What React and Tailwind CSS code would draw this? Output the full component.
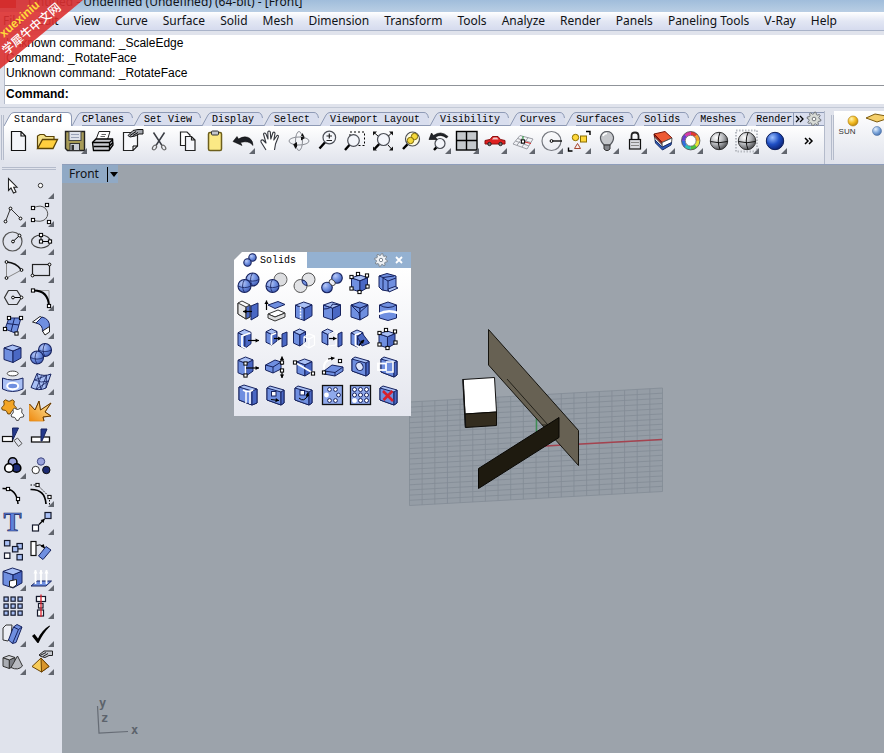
import React from "react";

const BLUE = "#6f8fe0";
const LIGHT = "#a9c0f5";
const DEEP = "#4a68c4";
const NAVY = "#16225e";
const INK = "#151a2c";

/* ---------- drawing primitives, all on a 28 x 28 canvas ---------- */

const pts = (a) => a.map((p) => p.join(",")).join(" ");

function Icon({ children, corner }) {
  return (
    <svg viewBox="0 0 28 28" className="block h-7 w-7 shrink-0" fill="none" stroke={INK} strokeWidth="1" aria-hidden="true">
      {children}
      {corner && <polygon points="27,21 27,27 21,27" fill="#62666e" stroke="none" />}
    </svg>
  );
}

function Poly({ p, f = "none", s = INK, w = 1 }) {
  return <polygon points={pts(p)} fill={f} stroke={s} strokeWidth={w} strokeLinejoin="round" />;
}

function Node({ at, f = "#fff" }) {
  return (
    <>
      {at.map(([x, y], i) => (
        <rect key={i} x={x - 1.6} y={y - 1.6} width="3.2" height="3.2" fill={f} stroke="#000" strokeWidth="1" />
      ))}
    </>
  );
}

function Dot({ at }) {
  return (
    <>
      {at.map(([x, y], i) => (
        <circle key={i} cx={x} cy={y} r="1.4" fill="#fff" stroke="#000" />
      ))}
    </>
  );
}

function Sq({ x, y, s = 5.4, f = LIGHT }) {
  return <rect x={x} y={y} width={s} height={s} fill={f} stroke={INK} strokeWidth="1.2" />;
}

function Sphere({ x, y, r, f = "url(#ball)", lines = true }) {
  return (
    <>
      <circle cx={x} cy={y} r={r} fill={f} stroke={NAVY} strokeWidth="1.1" />
      {lines && (
        <path
          d={`M${x - r} ${y} Q${x} ${y + r * 0.5} ${x + r} ${y} M${x} ${y - r} Q${x - r * 0.6} ${y} ${x} ${y + r}`}
          stroke={NAVY}
          strokeWidth=".8"
        />
      )}
    </>
  );
}

function Cube({ x = 5.5, y = 4.5, w = 16.5, h = 19, top = LIGHT, left = BLUE, right = DEEP, s = NAVY }) {
  const m = x + w * 0.53;
  const k = h * 0.17;
  return (
    <>
      <Poly p={[[x, y + k], [m, y + 2 * k], [m, y + h], [x, y + h - k]]} f={left} s={s} />
      <Poly p={[[m, y + 2 * k], [x + w, y + k * 0.9], [x + w, y + h - k * 1.5], [m, y + h]]} f={right} s={s} />
      <Poly p={[[x, y + k], [x + w * 0.5, y], [x + w, y + k * 0.9], [m, y + 2 * k]]} f={top} s={s} />
    </>
  );
}

function Slab({ x = 5, y = 4, w = 16, h = 19, t = 3, front = BLUE, top = LIGHT, s = NAVY }) {
  return (
    <>
      <Poly p={[[x, y + 2], [x + t, y], [x + w, y + 4], [x + w, y + h - 2], [x + w - t, y + h], [x, y + h - 5]]} f={top} s={s} />
      <Poly p={[[x, y + 2], [x + w - t, y + 6], [x + w - t, y + h], [x, y + h - 5]]} f={front} s={s} />
      <Poly p={[[x + w - t, y + 6], [x + w, y + 4], [x + w, y + h - 2], [x + w - t, y + h]]} f={DEEP} s={s} />
    </>
  );
}

function Arrow({ x1, y1, x2, y2, s = "#000", w = 1.2 }) {
  const a = Math.atan2(y2 - y1, x2 - x1);
  const q = (d) => [x2 - 4 * Math.cos(a + d), y2 - 4 * Math.sin(a + d)];
  return (
    <>
      <path d={`M${x1} ${y1} L${x2} ${y2}`} stroke={s} strokeWidth={w} />
      <polygon points={pts([[x2, y2], q(0.55), q(-0.55)])} fill={s} stroke="none" />
    </>
  );
}

function Lens({ x, y, r, hx, hy, f = "#f4f6fb" }) {
  const d = Math.hypot(hx - x, hy - y);
  const sx = x + ((hx - x) * r) / d;
  const sy = y + ((hy - y) * r) / d;
  return (
    <>
      <path d={`M${sx} ${sy} L${hx} ${hy}`} stroke="#000" strokeWidth="2.4" />
      <circle cx={x} cy={y} r={r} fill={f} stroke="#4b4e56" strokeWidth="1.2" />
    </>
  );
}

function Gear({ x, y, r, f, s, n = 8, hole = true }) {
  const p = [];
  for (let i = 0; i < n * 4; i++) {
    const k = i % 4 < 2 ? r : r * 0.72;
    const a = ((i + 0.5) * Math.PI) / (n * 2);
    p.push([(x + k * Math.cos(a)).toFixed(2), (y + k * Math.sin(a)).toFixed(2)]);
  }
  return (
    <>
      <Poly p={p} f={f} s={s} />
      {hole && <circle cx={x} cy={y} r={r * 0.26} fill="#fff" stroke={s} />}
    </>
  );
}

/* ---------- main toolbar ---------- */

const toolbar = [
  ["New", false, <path d="M7.500 4.500H17L21.500 9V23.500H7.500ZM17 4.500V9H21.500" fill="#f4f5f9" stroke="#111" strokeWidth="1.200" />],
  ["Open", false, <>
    <path d="M5.500 21V9L8 7.500H12L14 9.500H22V12" fill="#f4e18a" stroke="#5a4306" strokeWidth="1.200" />
    <path d="M5.500 21.500 10.500 12.500H25.500L21 21.500Z" fill="#ffcf3e" stroke="#5a4306" strokeWidth="1.300" />
  </>],
  ["Save", true, <>
    <path d="M5.500 4.500H24.500V23.500H7.500L5.500 21.500Z" fill="#a79b58" stroke="#222" strokeWidth="1.400" />
    <rect x="9" y="4.500" width="12" height="9" fill="#dfe3ec" stroke="#444" />
    <path d="M11 7.500H19M11 10.500H19" stroke="#9aa3b8" />
    <rect x="10" y="16.500" width="9.500" height="7" fill="#c9ccd6" stroke="#333" />
    <rect x="11.500" y="18" width="2.500" height="5" fill="#333" stroke="none" />
  </>],
  ["Print", false, <>
    <path d="M8 12.500 11 4.500H22L19.500 12.500" fill="#fff" stroke="#222" />
    <path d="M4.500 15.500 8 12H24.500L25 18 21 23.500H5.500Z" fill="#c8cad1" stroke="#000" strokeWidth="1.300" />
    <path d="M4.500 15.500H21.500L25 12.500M21.500 15.500V23" stroke="#000" strokeWidth="1.300" />
    <path d="M5.500 19.500H21L25 15.500" stroke="#000" strokeWidth="1.600" />
    <path d="M13.500 7.500H18M12.500 9.500H17" stroke="#666" />
  </>],
  ["Properties", false, <>
    <path d="M7.500 5.500H21.500V19L17 23.500H7.500Z" fill="#f8f9fc" stroke="#222" strokeWidth="1.200" />
    <path d="M21.500 19H17V23.500" stroke="#000" />
    <path d="M12 8.500 17 3.500 22 2.500H27V7H23L19 9 14 10Z" fill="#a4a7ae" stroke="#111" />
    <path d="M14 8.500 20 4.500M17 8.500 22 5.500" stroke="#111" />
  </>],
  ["Cut", false, <>
    <path d="M9.500 5.500 18 18.500M20.500 5.500 12 18.500" stroke="#3a3d44" strokeWidth="1.500" />
    <ellipse cx="10.500" cy="20.500" rx="1.700" ry="2.600" transform="rotate(35 10.500 20.500)" stroke="#666" strokeWidth="1.200" />
    <ellipse cx="19.700" cy="20.500" rx="1.700" ry="2.600" transform="rotate(-35 19.700 20.500)" stroke="#666" strokeWidth="1.200" />
  </>],
  ["Copy", false, <>
    <path d="M8.500 5H15L18 8V18.500H8.500Z" fill="#fff" stroke="#222" strokeWidth="1.200" />
    <path d="M13.500 9.500H19.500L23 13V23.500H13.500ZM19.500 9.500V13H23" fill="#f6f7fb" stroke="#222" strokeWidth="1.200" />
  </>],
  ["Paste", false, <>
    <rect x="8.500" y="5.500" width="13" height="18" rx="1.500" fill="#fbe985" stroke="#6d5f1c" strokeWidth="1.500" />
    <rect x="11.500" y="4" width="7" height="4" rx="1" fill="#c3c6cd" stroke="#333" />
  </>],
  ["Undo", true, <path d="M5 14.500 9 9.500 10.500 12Q17 8 22 11.500 25 14 25 18.500 21 13 12.500 15.500L14 18.500Z" fill="#1d1f25" stroke="#000" strokeWidth=".5" />],
  ["Pan", false, <path d="M10 23 5 15Q4.500 12.500 7 13L10 16 7.500 7Q8.500 5 10 7L12 12 11.800 5Q13 3 14.300 5L14.800 12 17 5.500Q18.700 4.500 19 6.500L17.800 13 21 8.500Q22.800 8 22.300 10L19.500 17 18.500 23" fill="#fff" stroke="#33363d" strokeWidth="1.100" strokeLinejoin="round" />],
  ["Rotate view", false, <>
    <ellipse cx="15" cy="14" rx="10" ry="4" stroke="#8a8d94" />
    <ellipse cx="15" cy="14" rx="3.500" ry="9.500" stroke="#8a8d94" />
    <path d="M9 17.500 13 15V20ZM21 11 17 8.500V13.500ZM18.500 6 20.500 10H16.500ZM11.500 22 9.500 18H13.500Z" fill="#111" stroke="none" />
  </>],
  ["Zoom dynamic", false, <>
    <Lens x={17.300} y={10.500} r={6.300} hx={7.500} hy={21.500} />
    <path d="M14.500 9H20M17.300 6.500V11.500M14.500 13.500H20" stroke="#222" strokeWidth="1.200" />
  </>],
  ["Zoom window", false, <>
    <rect x="10" y="5" width="14.500" height="13.500" stroke="#000" strokeDasharray="2 2" />
    <Lens x={13.500} y={13.500} r={5.800} hx={5} hy={23} />
  </>],
  ["Zoom extents", false, <>
    <Lens x={15.500} y={12.500} r={6} hx={6.500} hy={22} />
    <path d="M5 4.500H9L5 8.500ZM25 4.500H21L25 8.500ZM5 23.500V19.500L9 23.500ZM25 23.500V19.500L21 23.500Z" fill="#111" stroke="none" />
    <path d="M6 5.500 10 9M24 5.500 20.500 9M24 22.500 20 18" stroke="#111" />
  </>],
  ["Zoom selected", false, <>
    <Lens x={16.500} y={12} r={7} hx={7} hy={22} f="#fffbe0" />
    <circle cx="18.500" cy="9.500" r="3.200" fill="#f6d93b" stroke="#7c6a0a" />
    <circle cx="14.500" cy="13.500" r="3.200" fill="#f6d93b" stroke="#7c6a0a" />
  </>],
  ["Undo view", true, <>
    <Lens x={16} y={16.500} r={5} hx={10} hy={23} />
    <path d="M5 12.500 7.500 6 9.500 8.500Q17 3 24 9.500L22.500 11Q17 6.500 11.500 10L13 12.500Z" fill="#22242a" stroke="#000" strokeWidth=".6" />
  </>],
  ["4 Viewports", true, <>
    <rect x="4.500" y="4.500" width="20.500" height="18.500" fill="#c4c8cc" stroke="#000" strokeWidth="1.400" />
    <path d="M14.500 4.500V23M4.500 13.500H25" stroke="#000" strokeWidth="1.400" />
  </>],
  ["Car", true, <>
    <path d="M5 17V13.500L10 12.500 12.500 9.500H18L20.500 12.500 25 13.500V17Z" fill="#df2020" stroke="#8c0f0f" />
    <path d="M12 12.500 13.500 10.500H17L18.500 12.500Z" fill="#f3c9c9" stroke="none" />
    <circle cx="9.500" cy="17" r="1.700" fill="#777" stroke="#222" /><circle cx="20.500" cy="17" r="1.700" fill="#777" stroke="#222" />
  </>],
  ["Set CPlane", true, <>
    <path d="M5 17 12 8.500 25 12 19 22ZM7.500 14 21 19M9.500 11.500 23 15.500M9 18.200 15.500 9.500M14 20 20 10.500" stroke="#9b9ea5" />
    <path d="M15 14.500 23 16.500" stroke="#d42a2a" /><path d="M15 14V9" stroke="#2a9c3c" />
    <Node at={[[15, 14.500]]} />
  </>],
  ["Object snap", true, <>
    <circle cx="15.500" cy="14" r="9.500" stroke="#75787f" strokeWidth="1.200" />
    <path d="M15.500 14H26" stroke="#111" strokeWidth="1.400" />
    <Dot at={[[15.500, 14]]} />
  </>],
  ["Select", true, <>
    <circle cx="11.500" cy="10.500" r="3.200" fill="#ffd83a" stroke="#8a6d00" />
    <rect x="16.500" y="9" width="6" height="6" fill="#ffd83a" stroke="#8a6d00" />
    <path d="M13.500 16.500 16.500 21.500H10.500Z" fill="#f9efec" stroke="#a4452f" />
    <path d="M22 4.500H26V8M4.500 20.500V24H8.500" stroke="#000" strokeWidth="1.400" />
  </>],
  ["Hide", true, <>
    <path d="M12 18Q8 14 8.500 10Q10 4.500 15 4.500T21.500 10Q22 14 18 18Z" fill="#c6c8cc" stroke="#55585e" strokeWidth="1.200" />
    <path d="M12 18H18V22L16 23.500H14L12 22Z" fill="#85878c" stroke="#333" />
    <path d="M11 9Q12 6.500 15 6.500" stroke="#fff" strokeWidth="1.500" />
  </>],
  ["Lock", true, <>
    <path d="M11.500 13V9Q11.500 5.500 15 5.500T18.500 9V13" stroke="#222" strokeWidth="1.800" />
    <rect x="9.500" y="12.500" width="11" height="9.500" fill="#d9dbe0" stroke="#111" strokeWidth="1.200" />
    <path d="M11 15.500H19M11 18.500H19" stroke="#888" />
  </>],
  ["Layers", true, <>
    <Poly p={[[6, 7], [17, 4.500], [24, 11], [14, 15.500]]} f="#ee5a34" s="#7a1408" />
    <Poly p={[[6, 7], [14, 15.500], [14.300, 18], [6.500, 10]]} f="#b81c10" s="#5a0d06" />
    <Poly p={[[6.500, 10], [14.300, 18], [14.300, 20.500], [7, 13]]} f="#fff" s="#555" />
    <Poly p={[[14, 15.500], [24, 11], [23.500, 16], [14.300, 20.500]]} f="#fff" s="#555" />
    <Poly p={[[7, 13], [14.300, 20], [23.500, 15.500], [23, 18], [14.500, 23], [7.500, 16]]} f="#2c58b8" s="#1a2f66" />
  </>],
  ["Display color", true, <>
    {["#e33b2e", "#f3a02a", "#e8e337", "#4fc23a", "#2dbfb6", "#2f6fe0", "#6a3fd0", "#d63aa8"].map((c, i) => {
      const a = (i * Math.PI) / 4 - 1.570;
      const b = a + 0.830;
      return <path key={c} d={`M${14.700 + 7.300 * Math.cos(a)} ${13.700 + 7.300 * Math.sin(a)} A7.300 7.300 0 0 1 ${14.700 + 7.300 * Math.cos(b)} ${13.700 + 7.300 * Math.sin(b)}`} stroke={c} strokeWidth="3.600" />;
    })}
    <circle cx="14.700" cy="13.700" r="9.200" stroke="#444" strokeWidth=".8" /><circle cx="14.700" cy="13.700" r="5.400" stroke="#555" strokeWidth=".7" fill="#fff" />
  </>],
  ["Shade", false, <>
    <circle cx="15" cy="14" r="8.700" fill="url(#grayball)" stroke="#333" />
    <path d="M6.500 14.500Q15 17 23.500 14.500M16 5.500Q12.500 14 16 22.500" stroke="#111" />
  </>],
  ["Rendered", true, <>
    <rect x="4" y="3.500" width="21" height="21" stroke="#b8bbc2" strokeWidth="2" strokeDasharray="1.500 1.500" />
    <circle cx="15" cy="14" r="8.700" fill="url(#grayball)" stroke="#333" />
    <path d="M6.500 14.500Q15 17 23.500 14.500M16 5.500Q12.500 14 16 22.500" stroke="#111" />
  </>],
  ["Render", true, <circle cx="15" cy="14" r="8.700" fill="url(#deepball)" stroke="#0c1d5a" />],
];

/* ---------- side palette, two columns ---------- */

const hex = [[5.500, 13.500], [9.500, 6.500], [18, 6.500], [22.500, 13.500], [18, 20.500], [9.500, 20.500]];

const palette = [
  ["Select objects", false, <path d="M9.500 6.500V18.500L12 16 14.500 21 17 20 14.700 15.200H18Z" fill="#fff" stroke="#222" strokeWidth="1.100" />],
  ["Point", true, <circle cx="13.500" cy="13.500" r="2.200" fill="#fff" stroke="#333" />],
  ["Polyline", true, <><path d="M6.500 21.500 11.500 8.500 21.500 18.500" stroke="#333" /><Dot at={[[6.500, 21.500], [11.500, 8.500], [21.500, 18.500]]} /></>],
  ["Curve", true, <><path d="M6 8Q14 4 18.500 8.500 23 14 18.500 19 14 23 6 20" stroke="#555" /><Node at={[[6, 8], [20, 5], [6, 20], [22, 22]]} /></>],
  ["Circle", true, <><circle cx="13.500" cy="13.500" r="9.500" stroke="#555" strokeWidth="1.200" /><path d="M14 13.500 20.500 7.500" stroke="#000" /><Dot at={[[14, 13.500], [20.500, 7.500]]} /></>],
  ["Ellipse", true, <><ellipse cx="14" cy="13.500" rx="9.500" ry="6.500" stroke="#444" strokeWidth="1.200" /><path d="M14 7V13.500H23" stroke="#000" /><Node at={[[14, 7], [14, 13.500], [23, 13.500]]} /></>],
  ["Arc", true, <><path d="M7.500 6V22L22.500 14" stroke="#888" /><path d="M7.500 6Q17 6.500 22.500 14" stroke="#111" strokeWidth="1.500" /><Dot at={[[7.500, 6], [22.500, 14], [7.500, 22]]} /></>],
  ["Rectangle", true, <><rect x="5.500" y="8.500" width="17" height="11" stroke="#222" strokeWidth="1.200" /><Dot at={[[22.500, 8.500], [5.500, 19.500]]} /></>],
  ["Polygon", true, <><Poly p={hex} s="#333" w={1.200} /><path d="M14 13.500H22.500" stroke="#000" /><Dot at={[[14, 13.500], [22.500, 13.500]]} /></>],
  ["Fillet curves", true, <><path d="M6 6.500H22V22" stroke="#999" /><path d="M6 6.500Q21 6 22 22" stroke="#000" strokeWidth="2" /><Node at={[[6, 6.500], [22, 22]]} /></>],
  ["Surface from points", true, <><Poly p={[[10, 6], [22, 6], [17.500, 21.500], [6, 17]]} f={BLUE} s={NAVY} /><path d="M8 11.500 20 13M15.500 6 12 19.500" stroke={NAVY} /><Node at={[[10, 6], [22, 6], [6, 17], [17.500, 21.500]]} /></>],
  ["Surface creation", true, <>
    <Poly p={[[5.500, 10], [13, 4.500], [16, 6], [9, 11]]} f="#fff" s="#222" />
    <path d="M9 11 15 5Q23 7 22.500 15L15.500 19.500Q16 12.500 9 11Z" fill={BLUE} stroke={NAVY} />
    <Poly p={[[15.500, 19], [22.500, 14.500], [22.500, 20], [18, 23]]} f="#fff" s="#222" />
  </>],
  ["Box", true, <Cube x={5} y={5} w={17} h={17.500} />],
  ["Boolean union", true, <><Sphere x={18} y={10} r={6.500} /><Sphere x={10} y={17.500} r={6.500} /></>],
  ["Project curves", true, <>
    <ellipse cx="13.700" cy="5.500" rx="5.500" ry="2.400" fill="#fff" stroke="#444" />
    <path d="M3.500 10Q13.500 14 24 10V21Q13.500 26 3.500 21Z" fill={LIGHT} stroke={NAVY} />
    <ellipse cx="13.700" cy="18" rx="5.500" ry="3.200" fill={BLUE} stroke="#fff" strokeWidth="2" />
  </>],
  ["Mesh", true, <>
    <path d="M10 5.500Q17 9 24 6L19 20Q12 23.500 4 19.500Z" fill={LIGHT} stroke={NAVY} />
    <path d="M7.500 12Q14 15.500 21.500 13M14.500 7.500 9 21.500M19.500 7.500 14 21.500M10 5.500 14 21.500M7.500 12 19.500 7.500M21.500 13 9 21.500M19.500 7.500 19 20" stroke={NAVY} strokeWidth=".8" />
  </>],
  ["Join", false, <><Gear x={10} y={10.500} r={7.500} n={5} hole={false} f="#f3a526" s="#6a4204" /><Gear x={18.500} y={18} r={6.500} n={5} hole={false} f="#fff" s="#444" /></>],
  ["Explode", false, <>
    <Poly p={[[2.500, 8], [8, 14], [12, 5], [13.500, 14], [24, 7], [18, 16], [24, 20], [16, 21], [17, 25], [2.500, 25]]} f="url(#burst)" s="#e58a16" w={0.800} />
    <path d="M2.500 8 8 14 12 5 13.500 14 24 7 18 16 24 20 16 21 17 25" stroke="#5b3605" />
  </>],
  ["Trim", false, <>
    <rect x="3.500" y="12.500" width="10" height="5" fill="#fff" stroke="#111" strokeWidth="1.200" />
    <Poly p={[[13.500, 4], [19.500, 4], [14, 15.500]]} f="#23398c" s={NAVY} />
    <Poly p={[[15, 16.500], [18.500, 14], [23, 19.500], [19.500, 22.500]]} s="#555" />
  </>],
  ["Split", false, <><rect x="4.500" y="13" width="18" height="5" fill="#fff" stroke="#111" strokeWidth="1.300" /><Poly p={[[14, 5], [20, 5], [15, 17], [14, 17]]} f="#23398c" s={NAVY} /></>],
  ["Group", true, <>
    <circle cx="13.700" cy="10" r="4.300" fill="#9aa3dc" stroke="#000" strokeWidth="1.600" /><circle cx="17.500" cy="16" r="4.300" fill="#1c2a72" stroke="#000" strokeWidth="1.600" /><circle cx="10" cy="16" r="4.300" fill="#fff" stroke="#000" strokeWidth="1.600" />
  </>],
  ["Ungroup", false, <>
    <circle cx="14" cy="9.500" r="3.700" fill="#9aa3dc" stroke="#3d4680" /><circle cx="8.700" cy="18" r="3.700" fill="#fff" stroke="#333" /><circle cx="19.300" cy="18" r="3.700" fill="#1c2a72" stroke="#111" />
  </>],
  ["Edit points", false, <><path d="M3.500 8.500Q18 8 19 24" stroke="#000" strokeWidth="1.500" /><Node at={[[9, 9], [19, 19]]} /></>],
  ["Control points", true, <><path d="M3.500 5H10.500L22.500 17V25" stroke="#000" strokeDasharray="1.500 1.500" /><path d="M3.500 9.500Q18 9 19 24" stroke="#000" strokeWidth="1.700" /><Node at={[[10.500, 5], [22.500, 17]]} /></>],
  ["Text", false, <text x="13.500" y="23" textAnchor="middle" fontSize="27" fontWeight="700" fontFamily="Liberation Serif, serif" fill="#5f82dc" stroke={NAVY} strokeWidth=".7">T</text>],
  ["Move", true, <><Sq x={5.500} y={17} s={6} f="#fff" /><Sq x={18} y={4.500} s={6} /><Arrow x1={12} y1={16.500} x2={17.500} y2={11} /></>],
  ["Copy objects", false, <><Sq x={5.500} y={4.500} /><Sq x={18} y={7.500} /><Sq x={13.500} y={10.500} /><Sq x={5.500} y={17} f="#fff" /><Sq x={18} y={18.500} /></>],
  ["Rotate", false, <>
    <rect x="4" y="5.500" width="5" height="14" fill="#fff" stroke="#111" strokeWidth="1.200" />
    <Poly p={[[19, 10.500], [24, 14], [16, 23.500], [11.500, 20]]} f={BLUE} s={NAVY} />
    <path d="M9.500 9.500Q13 8 16 10" stroke="#000" /><Arrow x1={15} y1={9} x2={17.500} y2={12} />
  </>],
  ["Extract", true, <>
    <Cube x={4} y={4} w={19} h={20} /><Poly p={[[10.500, 17], [17.500, 15.500], [17.500, 21], [14, 23.500], [10.500, 22.500]]} f="#fff" s="#222" />
  </>],
  ["Extrude", true, <>
    <Poly p={[[4, 22], [10, 17], [24.500, 17], [19, 22]]} f={BLUE} s={NAVY} />
    {[8.500, 14, 19.500].map((x) => <Arrow key={x} x1={x} y1={20} x2={x} y2={6} s="#fff" w={1.800} />)}
  </>],
  ["Array", false, <>{[5, 12, 19].map((x) => [5, 12, 19].map((y) => <Sq key={`${x}-${y}`} x={x} y={y} s={4.200} />))}</>],
  ["Align", true, <>
    <Sq x={9.500} y={4.500} s={5} f="#fff" /><rect x="9.500" y="4.500" width="9" height="5" fill="#fff" stroke={INK} strokeWidth="1.200" /><Sq x={11.500} y={11.500} s={4.500} f="#fff" /><Sq x={10.500} y={18} s={6} f="#fff" /><path d="M14 2.500V25" stroke="#d9202c" strokeWidth="1.300" />
  </>],
  ["Orient", true, <>
    <Poly p={[[4, 8], [7, 5], [13, 5], [12, 17], [9, 21], [4, 20]]} f="#eceef4" s="#333" />
    <Poly p={[[14.500, 7], [18, 4.500], [23, 7], [17, 22.500], [13.500, 23.500], [9.500, 20]]} f={BLUE} s={NAVY} /><path d="M14.500 7 19.500 9.500 23 7M19.500 9.500 13.500 23.500" stroke={NAVY} />
  </>],
  ["Check", true, <path d="M5 16 7.500 14 11 18.500Q15 10 22.500 5.500L23 6.200Q16 13 11.500 23H10.500Z" fill="#000" stroke="none" />],
  ["Shapes", true, <>
    <Cube x={4} y={7.500} w={12} h={13} top="#d4d6da" left="#a9acb2" right="#7e8188" s="#333" />
    <path d="M18.500 8 23.500 18Q19 23 12 19.500Z" fill="#b9bcc2" stroke="#333" />
  </>],
  ["Render tools", true, <>
    <Poly p={[[14, 10], [22, 18.500], [14.500, 24], [5, 18.500]]} f="#f8cc58" s="#6a4204" /><Poly p={[[14, 10], [22, 18.500], [14.500, 24]]} f="#d9962a" s="#6a4204" />
    <path d="M12 7 17 3H25.500V7.500H22L18 9.500 14 8.500Z" fill="#c5c8ce" stroke="#222" /><path d="M13 7.500 19 4.500M16 8.500 21 5.500" stroke="#222" />
  </>],
];

/* ---------- floating solids toolbar, six columns ---------- */

const eightNodes = [[5.500, 8], [12, 5], [21, 6.500], [21.500, 17.500], [13.500, 23], [5.500, 19.500]];

const solids = [
  ["Union", <><Sphere x={18.500} y={10.500} r={6.500} /><Sphere x={10.500} y={17} r={6.500} /></>],
  ["Difference", <><circle cx="18.500" cy="10.500" r="6.500" fill="#dcdde0" stroke="#666" /><Sphere x={10.500} y={17} r={6.500} /></>],
  ["Intersection", <>
    <circle cx="18.500" cy="10.500" r="6.500" fill="#e2e3e6" stroke="#555" /><circle cx="10.500" cy="17" r="6.500" fill="#e2e3e6" stroke="#555" />
    <path d="M12 11Q17 11.500 17 16.500Q12 16 12 11Z" fill={BLUE} stroke={NAVY} />
  </>],
  ["Boolean split", <><Sphere x={19} y={9} r={5.300} lines={false} /><Sphere x={9} y={18.500} r={5.300} lines={false} /><ellipse cx="14.200" cy="13.500" rx="3.500" ry="2.500" transform="rotate(45 14.200 13.500)" fill="#eceef5" stroke="#333" strokeWidth=".8" /></>],
  ["Edit points on", <><Cube x={5.500} y={6} w={16} h={17} /><Node at={eightNodes} /></>],
  ["Shell", <>
    <Poly p={[[5, 7], [13, 4.500], [22, 7], [22, 19], [14, 22], [8, 21], [5, 18]]} f={BLUE} s={NAVY} />
    <path d="M5 7 9 8.500V21M9 8.500 20 7M9 9 14 12V22M14 12 22 9" stroke={NAVY} /><Poly p={[[14, 20], [21, 17.500], [24, 19], [15, 23]]} f={LIGHT} s={NAVY} />
  </>],
  ["Cap holes", <>
    <Slab x={4} y={4} w={12} h={18} t={4} front="#e6e6e6" top="#fafafa" s="#333" /><Poly p={[[17, 9], [24, 6], [24, 19], [17, 23]]} f={DEEP} s={NAVY} /><Arrow x1={18} y1={14.500} x2={9} y2={14.500} />
  </>],
  ["Extract surface", <>
    <Poly p={[[6, 17], [16, 13], [23, 16], [13, 20]]} f="#fff" s="#333" /><Poly p={[[6, 17], [13, 20], [23, 16], [23, 20], [13, 24], [6, 21]]} f="#dedede" s="#333" />
    <Poly p={[[6, 8], [16, 4.500], [23, 7.500], [13, 11.500]]} f={BLUE} s={NAVY} /><Arrow x1={4.500} y1={13} x2={4.500} y2={3.500} />
  </>],
  ["Merge faces", <><Cube x={5.500} y={5} w={16.500} h={18.500} /><path d="M10.500 9.500V22" stroke="#fff" strokeWidth="1.500" strokeDasharray="2 1" /></>],
  ["Fillet edge", <><Cube x={5.500} y={5} w={17} h={18} /><path d="M6 12Q13 12 14.500 7L22 8" stroke={NAVY} /></>],
  ["Chamfer edge", <><Cube x={5} y={5} w={17} h={18} left={BLUE} right={BLUE} top={BLUE} /><path d="M5 8 13 16 22 8M13 16 14 23" stroke={NAVY} /></>],
  ["Wire cut", <>
    <path d="M5.500 8 14 5 22.500 8V21L14 23.500 5.500 21Z" fill={BLUE} stroke={NAVY} /><path d="M5.500 8Q14 13 22.500 8" stroke={NAVY} />
    <path d="M4.500 17Q14 12 24 16" stroke="#fff" strokeWidth="2.500" />
  </>],
  ["Extrude face", <><Cube x={4} y={4.500} w={13} h={19} /><path d="M16.500 8 8 11V21.500L12 23.500" stroke="#fff" strokeWidth="1.800" /><Arrow x1={14} y1={15.500} x2={25} y2={15.500} /></>],
  ["Extrude to boundary", <><Cube x={4} y={4} w={11} h={16} /><path d="M14 8 9.500 10V20" stroke="#fff" strokeWidth="1.800" /><Arrow x1={12} y1={13.500} x2={19.500} y2={13.500} /><Poly p={[[20, 9], [25, 7], [25, 20], [20, 22]]} f={DEEP} s={NAVY} /></>],
  ["Copy face", <><Cube x={3.500} y={4} w={12} h={17} /><path d="M14 12 19 9 24.500 11V20L19 23 14 20ZM14 12 19 14 24.500 11M19 14V23" stroke="#fff" strokeWidth="1.200" /></>],
  ["Move face", <><Cube x={4} y={4} w={11} h={16} /><path d="M11 9 18 6V20L11 21Z" fill="#e9ebf5" stroke="#fff" /><Arrow x1={11} y1={13.500} x2={18.500} y2={13.500} /><Poly p={[[20, 9], [24, 7], [24, 20], [20, 22]]} f={DEEP} s={NAVY} /></>],
  ["Rotate face", <><Cube x={5} y={5} w={12} h={17} /><path d="M15 8 9.500 10V20L13 22" stroke="#fff" strokeWidth="1.800" /><Poly p={[[11.500, 12], [16, 8], [23.500, 18], [16, 21]]} f={DEEP} s={NAVY} /><Arrow x1={13} y1={20} x2={18} y2={15} /></>],
  ["Solid points", <><Cube x={5} y={6} w={16} h={17} /><Node at={eightNodes} /></>],
  ["Move edge", <><Cube x={4} y={4} w={15} h={19} /><path d="M11.500 9V23" stroke="#fff" strokeWidth="1.500" /><Arrow x1={12} y1={15} x2={25} y2={15} /><Node at={[[11.500, 10.500], [11.500, 22.500]]} /></>],
  ["Shear", <><Poly p={[[3.500, 12], [13, 7], [19, 9], [19, 16], [11, 20], [3.500, 17]]} f={BLUE} s={NAVY} /><path d="M3.500 12 11 14 19 9M11 14V20" stroke={NAVY} /><Arrow x1={20} y1={12} x2={20} y2={3.500} /><Arrow x1={20} y1={17} x2={20} y2={25} /><Node at={[[20, 9.500], [20, 17.500]]} /></>],
  ["Split face", <><Cube x={7} y={6} w={15} h={17} /><path d="M5 9.500 23 20" stroke="#fff" strokeWidth="2" /><Node at={[[5, 9.500], [23, 20.500]]} /></>],
  ["Fold face", <><Poly p={[[6, 18], [14, 12], [25, 14], [25, 18], [17, 23], [6, 21]]} f={BLUE} s={NAVY} /><path d="M6 18 17 19.500 25 14M17 19.500V23" stroke={NAVY} /><path d="M6 16Q5 8 13 6" stroke="#fff" strokeWidth="2.200" /><Arrow x1={10} y1={6} x2={16.500} y2={5} /><Node at={[[6, 19.500], [22, 8]]} /></>],
  ["Round hole", <><Slab x={6} y={4} w={17} h={19} /><ellipse cx="13.500" cy="13.500" rx="3.400" ry="4.200" transform="rotate(-30 13.500 13.500)" fill="#dfe6fa" stroke={NAVY} /></>],
  ["Place hole", <><Slab x={7} y={4} w={16} h={20} /><rect x="4" y="10.500" width="8" height="6.500" stroke="#fff" strokeWidth="1.800" /><path d="M12 9H19V19H12" stroke="#fff" strokeWidth="1.600" /></>],
  ["Revolve hole", <><Slab x={5} y={4} w={18} h={20} t={5} /><path d="M9 9Q14 12 19 9M12 11V22M16 11V23" stroke="#fff" strokeWidth="1.500" /></>],
  ["Move hole", <><Slab x={5} y={5} w={17} h={19} /><rect x="9.500" y="10.500" width="4.500" height="4.500" fill="#fff" stroke={NAVY} /><Arrow x1={9} y1={18.500} x2={17} y2={19.500} /></>],
  ["Rotate hole", <><Slab x={5} y={5} w={17} h={19} /><rect x="10" y="9.500" width="4.500" height="4.500" fill="#fff" stroke={NAVY} /><path d="M9 17Q14 22 18 14" stroke="#000" /><Arrow x1={17} y1={16} x2={18} y2={11.500} /></>],
  ["Polar array hole", <>
    <rect x="4.500" y="4.500" width="20" height="19" fill="#8fa9ec" stroke="#111" strokeWidth="1.300" />
    {[[11.500, 8.500], [17.500, 8.500], [20.500, 14], [17.500, 19.500], [11.500, 19.500]].map(([x, y]) => <circle key={`${x}${y}`} cx={x} cy={y} r="1.900" fill="#fff" stroke={NAVY} />)}
    <circle cx="8.500" cy="14" r="2.400" fill="#fff" stroke="none" />
  </>],
  ["Grid array hole", <>
    <rect x="4.500" y="4.500" width="20" height="19" fill="#8fa9ec" stroke="#111" strokeWidth="1.300" />
    {[8.500, 14.500, 20.500].map((x) => [8.500, 14, 19.500].map((y) => <circle key={`${x}${y}`} cx={x} cy={y} r="2" fill="#fff" stroke={x === 8.500 && y === 19.500 ? "#fff" : NAVY} />))}
  </>],
  ["Delete hole", <><Slab x={6} y={5} w={17} h={19} /><path d="M9 10 19 20M18.500 10 9.500 19" stroke="#d9202c" strokeWidth="2.600" /></>],
];

const menus = ["File", "Edit", "View", "Curve", "Surface", "Solid", "Mesh", "Dimension", "Transform", "Tools", "Analyze", "Render", "Panels", "Paneling Tools", "V-Ray", "Help"];
const tabs = ["Standard", "CPlanes", "Set View", "Display", "Select", "Viewport Layout", "Visibility", "Curves", "Surfaces", "Solids", "Meshes", "Render"];

function Defs() {
  const ball = (id, a, b, c) => (
    <radialGradient id={id} cx=".35" cy=".3" r=".8">
      <stop offset="0" stopColor={a} /><stop offset=".5" stopColor={b} /><stop offset="1" stopColor={c} />
    </radialGradient>
  );
  return (
    <svg className="absolute h-0 w-0" aria-hidden="true">
      <defs>
        {ball("ball", "#b9caf8", "#6f8fe0", "#3a55ac")}
        {ball("grayball", "#ffffff", "#b3b5b9", "#3c3d40")}
        {ball("deepball", "#9cc0ff", "#1f4fc4", "#071a66")}
        {ball("sun", "#fff3b0", "#f4bd25", "#b07a08")}
        {ball("sky", "#e8f2ff", "#7fa8dc", "#3b66a8")}
        <linearGradient id="burst" x1="1" y1="0" x2="0" y2="1">
          <stop offset="0" stopColor="#ffe9a0" /><stop offset="1" stopColor="#ee8a10" />
        </linearGradient>
      </defs>
    </svg>
  );
}

function Tab({ label, active }) {
  const fill = active ? "#ffffff" : "#d9deee";
  return (
    <button type="button" role="tab" aria-selected={!!active} className="flex h-[14px] shrink-0 items-stretch">
      <svg viewBox="0 0 10 14" className="h-[14px] w-[10px]" aria-hidden="true">
        <path d="M0 14 6 3Q7.500 .5 10 .5V14Z" fill={fill} />
        <path d="M0 14 6 3Q7.500 .5 10 .5" fill="none" stroke="#8e9ab5" />
      </svg>
      <span className={"border-t border-[#8e9ab5] leading-[13px] " + (active ? "bg-white" : "border-b bg-[#d9deee]")}>{label}</span>
      <svg viewBox="0 0 10 14" className="h-[14px] w-[10px]" aria-hidden="true">
        <path d="M0 .5H4Q8 .5 9 5L9.500 14H0Z" fill={fill} />
        <path d={active ? "M0 .5H6Q9.500 .5 9.500 4V14" : "M0 .5H4Q7.500 .5 8.500 6M0 13.500H10"} fill="none" stroke="#8e9ab5" />
      </svg>
    </button>
  );
}

function Handle() {
  return <div className="my-1 w-[3px] shrink-0 border-x border-[#b4bbcb]" />;
}

function Scene() {
  const n = Array.from({ length: 21 }, (_, i) => i);
  return (
    <svg viewBox="409 328 256 180" className="absolute left-[347px] top-[163px] h-[180px] w-[256px]" aria-label="Perspective model" role="img">
      <polygon points="409.500,402 662.500,388 662.500,491.500 409.500,505.500" fill="#959da6" />
      <g stroke="#838b95" strokeWidth=".8">
        {n.map((i) => {
          const x = 409.500 + i * 12.650;
          return <line key={`v${i}`} x1={x} x2={x} y1={402 - i * 0.700} y2={505.500 - i * 0.700} />;
        })}
        {n.map((i) => <line key={`h${i}`} x1="409.500" x2="662.500" y1={402 + i * 5.175} y2={388 + i * 5.175} />)}
      </g>
      <line x1="536" y1="446.500" x2="662" y2="439.500" stroke="#a5434f" strokeWidth="1.500" />
      <line x1="536.500" y1="416" x2="536.500" y2="446" stroke="#3f8f55" strokeWidth="1.500" />
      <polygon points="488.500,329.500 578.500,430.500 578.500,465.500 488.500,365" fill="#676153" stroke="#15140f" />
      <polyline points="507,379 548,425 542,425" fill="none" stroke="#24221b" />
      <polygon points="478.500,468.500 559,417.500 559,437.500 478.500,488.500" fill="#1e1a0f" stroke="#080704" />
      <polygon points="463,379.500 494.500,377.500 496.500,412 465,414" fill="#fff" stroke="#111" />
      <polygon points="465,414 496.500,412 496.500,425.500 465.500,427.500" fill="#332c1e" stroke="#0c0a06" />
      <line x1="463" y1="379" x2="465.500" y2="427.500" stroke="#111" strokeWidth="1.500" />
    </svg>
  );
}

function SolidsPanel() {
  return (
    <section aria-label="Solids" className="absolute left-[172px] top-[87px] w-[177px] pb-[7px]">
      <header className="flex h-4 items-center">
        <h2 className="flex h-4 w-[73px] shrink-0 items-center bg-white pl-[9px] font-['Liberation_Mono','DejaVu_Sans_Mono',monospace] text-[10px] text-black [clip-path:polygon(8px_0,100%_0,100%_100%,0_100%,0_8px)]">
          <svg viewBox="0 0 14 14" className="mr-[3px] h-[14px] w-[14px]" fill="none" aria-hidden="true">
            <Sphere x={9.500} y={4.500} r={3.700} lines={false} /><Sphere x={4.500} y={9.500} r={3.700} lines={false} />
          </svg>
          Solids
        </h2>
        <div className="flex h-4 flex-1 items-center justify-end bg-[#94b1d1]">
          <button type="button" aria-label="Options" className="h-4 w-4">
            <svg viewBox="0 0 16 16" className="h-4 w-4" fill="none" aria-hidden="true"><Gear x={8} y={8} r={6.500} f="#eef1f5" s="#7d8792" /></svg>
          </button>
          <button type="button" aria-label="Close" className="ml-1 mr-[6px] flex h-4 w-3 items-center justify-center">
            <svg viewBox="0 0 8 8" className="h-2 w-2" aria-hidden="true"><path d="M1 1 7 7M7 1 1 7" stroke="#fff" strokeWidth="1.800" /></svg>
          </button>
        </div>
      </header>
      <div className="-mb-[7px] bg-gradient-to-b from-white to-[#e4e6ee] pb-[7px]">
        <div className="grid w-[168px] grid-cols-6 pt-px">
          {solids.map(([name, art]) => (
            <button type="button" key={name} aria-label={name}><Icon>{art}</Icon></button>
          ))}
        </div>
      </div>
    </section>
  );
}

export default function App() {
  return (
    <div className="relative flex min-h-screen flex-col overflow-hidden bg-[#e0e3ec] font-['Noto_Sans','Open_Sans',sans-serif] text-[12px] text-[#101216]">
      <Defs />
      <header className="flex h-3 items-end gap-3 overflow-hidden bg-gradient-to-b from-[#a0bddb] to-[#b9cee4] pb-[2px]">
        <span className="h-2 w-4 self-start bg-[#8d1c1c]" />
        <h1 className="whitespace-nowrap text-[12px] leading-4">Untitled - Undefined (Undefined) (64-bit) - [Front]</h1>
      </header>
      <nav className="flex h-[19px] items-center gap-[15px] overflow-hidden border-b border-[#a9b3c9] bg-gradient-to-b from-white via-[#e3e7f4] to-[#d5dbee] pl-[3px]">
        {menus.map((m) => (
          <button type="button" key={m} className="shrink-0 whitespace-nowrap leading-[18px]">{m}</button>
        ))}
      </nav>

      <section className="mt-1 ml-1 border-l border-[#b4bbcb] bg-white font-['Liberation_Sans',Arial,sans-serif] text-[12px] text-black">
        <div className="h-[51px] border-b border-[#8f9399] pt-px pl-px leading-[15px]">
          <p>Unknown command: _ScaleEdge</p>
          <p>Command: _RotateFace</p>
          <p>Unknown command: _RotateFace</p>
        </div>
        <div className="flex h-[18px] items-start pl-px">
          <label htmlFor="command" className="font-bold leading-4">Command:</label>
          <input id="command" type="text" className="ml-1 h-4 flex-1 bg-transparent outline-none" />
        </div>
      </section>

      <div className="mt-[3px] flex h-[57px] border-t border-[#c3c9d6] pt-[3px] pl-px">
        <Handle />
        <div className="flex min-w-0 flex-1 flex-col border-r border-[#b4bbcb]">
          <div className="flex pt-px font-['Liberation_Mono','DejaVu_Sans_Mono',monospace] text-[10px] text-black">
            <div role="tablist" className="flex min-w-0 flex-1 overflow-hidden border-r border-[#8e9ab5]">
              {tabs.map((t, i) => <Tab key={t} label={t} active={i === 0} />)}
            </div>
            <button type="button" aria-label="More tabs" className="w-3 border-y border-[#8e9ab5] bg-[#d9deee]">
              <svg viewBox="0 0 12 12" className="h-3 w-3" fill="none" stroke="#000" strokeWidth="1.300" aria-hidden="true"><path d="M2 3 5 6 2 9M6 3 9 6 6 9" /></svg>
            </button>
            <button type="button" aria-label="Toolbar options" className="w-[18px] border-y border-[#8e9ab5] bg-[#d9deee]">
              <svg viewBox="0 0 18 12" className="h-3 w-[18px] overflow-visible" fill="none" aria-hidden="true"><Gear x={8} y={6} r={7} f="#d8dbd6" s="#70747a" /></svg>
            </button>
          </div>
          <div className="flex flex-1 items-start overflow-hidden bg-gradient-to-b from-white to-[#e0e3ec] pt-px">
            {toolbar.map(([name, corner, art]) => (
              <button type="button" key={name} aria-label={name} className="shrink-0"><Icon corner={corner}>{art}</Icon></button>
            ))}
            <button type="button" aria-label="More tools" className="ml-[15px] shrink-0">
              <svg viewBox="0 0 12 28" className="h-7 w-3" fill="none" stroke="#000" strokeWidth="1.500" aria-hidden="true"><path d="M2 11 5 14 2 17M6 11 9 14 6 17" /></svg>
            </button>
          </div>
        </div>
        <div className="ml-[6px] flex"><Handle /></div>
        <div className="w-[50px] shrink-0 overflow-hidden bg-gradient-to-b from-white to-[#e0e3ec]">
          <div className="flex">
            <button type="button" className="flex w-[26px] flex-col items-center pt-[4px] font-['Liberation_Sans',Arial,sans-serif] text-[8px] leading-[10px] text-[#333]">
              <svg viewBox="0 0 12 12" className="ml-3 h-3 w-3" aria-hidden="true"><circle cx="6" cy="6" r="5" fill="url(#sun)" stroke="#a8780c" strokeWidth=".6" /></svg>
              SUN
            </button>
            <button type="button" aria-label="Lights" className="w-6">
              <svg viewBox="0 0 24 28" className="h-7 w-6" aria-hidden="true">
                <polygon points="6,7 15,3 26,5 26,8 17,11" fill="#f5cf6a" stroke="#7d5c10" />
                <circle cx="17" cy="20" r="4.500" fill="url(#sky)" stroke="#5475a3" strokeWidth=".6" />
              </svg>
            </button>
          </div>
        </div>
      </div>

      <div className="flex flex-1">
        <aside className="w-[62px] shrink-0">
          <div className="ml-[2px] mt-[3px] h-[3px] w-[54px] border-y border-[#b4bbcb]" />
          <div className="-ml-px mt-[2px] grid w-14 grid-cols-2">
            {palette.map(([name, corner, art]) => (
              <button type="button" key={name} aria-label={name}><Icon corner={corner}>{art}</Icon></button>
            ))}
          </div>
        </aside>
        <main className="relative min-w-0 flex-1 border-t border-[#8e9dba] bg-[#9ca3ab]">
          <div className="flex h-[18px] w-14 items-center bg-[#90a9c5] pl-[7px]">
            <span className="w-[38px]">Front</span>
            <button type="button" aria-label="Viewport menu" className="flex h-[15px] items-center border-l border-black pl-[2px]">
              <svg viewBox="0 0 8 5" className="h-[5px] w-2" aria-hidden="true"><path d="M0 0H8L4 5Z" /></svg>
            </button>
          </div>
          <Scene />
          <SolidsPanel />
          <svg viewBox="0 0 50 46" className="absolute bottom-[14px] left-[32px] h-[46px] w-[50px] font-['DejaVu_Sans_Mono',monospace] text-[12px] font-bold" fill="#5d636c" role="img" aria-label="Axes">
            <path d="M3.500 13 5 40 34 38.500" fill="none" stroke="#666c75" strokeWidth="1.200" />
            <text x="5" y="14">y</text><text x="7" y="29">z</text><text x="37" y="41">x</text>
          </svg>
        </main>
      </div>

      <svg viewBox="0 0 84 70" className="pointer-events-none absolute left-0 top-0 h-[70px] w-[84px]" role="img" aria-label="xuexiniu">
        <polygon points="0,0 83,0 0,69" fill="#dc3030" fillOpacity=".9" />
        <g textAnchor="middle">
          <text transform="translate(22 22) rotate(-41)" fontSize="12" fontWeight="700" fill="#ffd83a" fontFamily="Liberation Sans, Arial, sans-serif">xuexiniu</text>
          <text transform="translate(34 32) rotate(-40)" fontSize="12" fontWeight="500" fill="#fff" fontFamily="Noto Sans CJK SC, sans-serif">学犀牛中文网</text>
        </g>
      </svg>
    </div>
  );
}
